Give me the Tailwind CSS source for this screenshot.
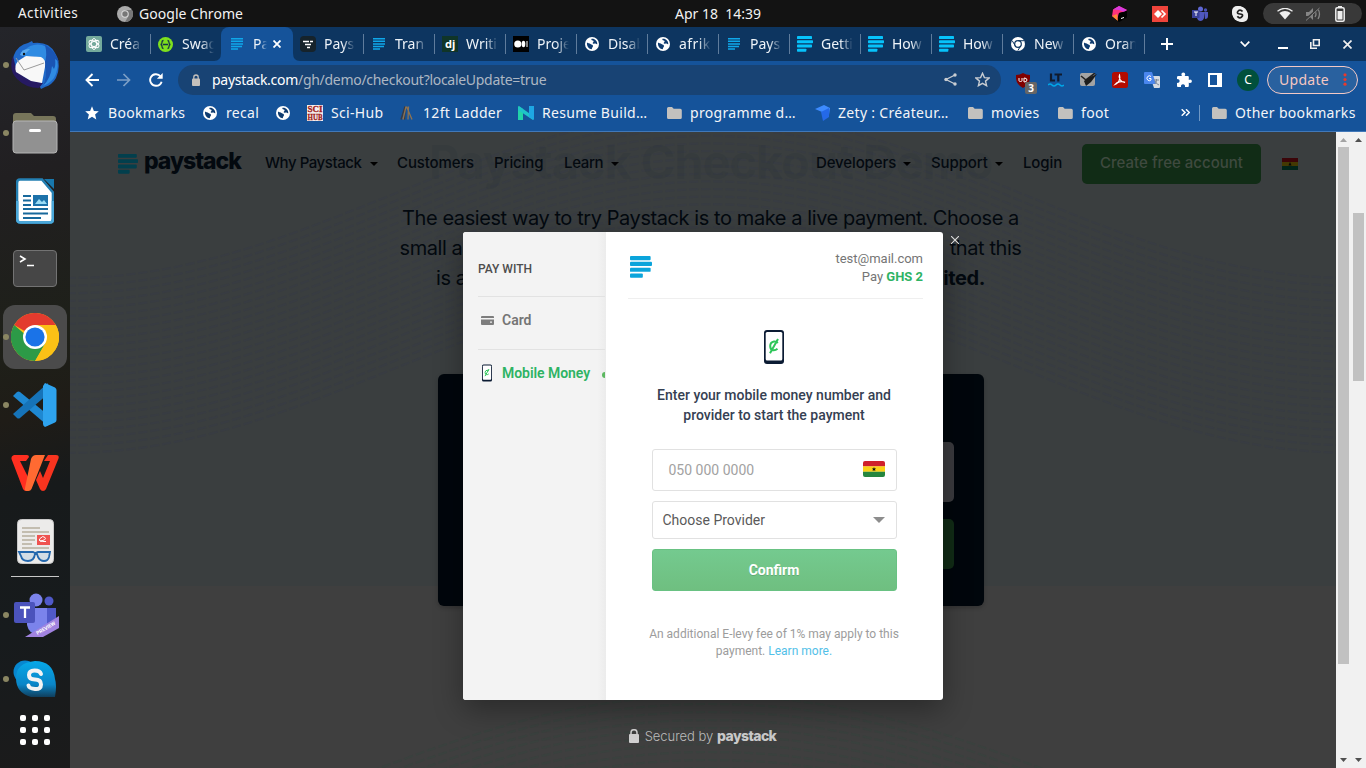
<!DOCTYPE html>
<html lang="en">
<head>
<meta charset="utf-8">
<title>Paystack Checkout Demo</title>
<script src="https://cdn.jsdelivr.net/npm/@tailwindcss/browser@4"></script>
</head>
<body class="w-[1366px] h-[768px] overflow-hidden bg-[#131313] font-['Noto_Sans',sans-serif]">

<svg width="0" height="0" class="absolute">
  <symbol id="stack" viewBox="0 0 24 24"><rect x="0" y="0" width="22.500" height="4.600" rx="1"/><rect x="0" y="6.300" width="24" height="4.600" rx="1"/><rect x="0" y="12.700" width="22.500" height="4.600" rx="1"/><rect x="0" y="19" width="14" height="4.600" rx="1"/></symbol>
  <symbol id="thin" viewBox="0 0 12 12"><path d="M0 .7h12M0 3.300h12M0 5.900h12M0 8.500h11M0 11h7" stroke="#0fa8ea" stroke-width="1.500"/></symbol>
  <symbol id="globe" viewBox="0 0 14 14"><circle cx="7" cy="7" r="7" fill="#fff"/><path d="M2 5.500C3 6.200 4.500 6 5.500 7s2.500.6 2.500 2-1 1.200-1.200 3.200C3.800 12 1.600 9.500 2 5.500zM6.500 1.800c-.5 1.200.2 1.600 1.200 1.600S9 4.600 8 5.400s.5 1.400 1.700 1.200 1.300.8 2.600.6C12.500 4 9.700 1.300 6.500 1.800z" fill="#0f3c70"/></symbol>
  <symbol id="folder" viewBox="0 0 15 12"><path d="M0 1.500Q0 0 1.500 0H5l1.700 1.800h6.600q1.500 0 1.500 1.500v7.200q0 1.500-1.500 1.500H1.500Q0 12 0 10.500z" fill="#c3c1be"/></symbol>
  <symbol id="ghana" viewBox="0 0 22 16"><path d="M2 0h18q2 0 2 2v3.500H0V2q0-2 2-2z" fill="#cf202b"/><path d="M0 5.300h22v5.500H0z" fill="#fbd116"/><path d="M0 10.700h22V14q0 2-2 2H2q-2 0-2-2z" fill="#25863f"/><path d="M11 6l.6 1.400h1.500l-1.100 1 .4 1.600-1.400-.8-1.400.8.4-1.600-1.100-1h1.500z" fill="#111"/></symbol>
  <symbol id="phone" viewBox="0 0 20 34"><rect width="20" height="34" rx="3" fill="#0b1b33"/><rect x="1.700" y="1.900" width="16.600" height="28.600" rx="1.500" fill="#fff"/><path d="M13.800 13Q12.200 11.200 10 11.500 6.200 12.200 6.200 16t3 4.300q2.300.3 4.300-1.500M14 9L6 23.300" fill="none" stroke="#2fc65a" stroke-width="2"/></symbol>
</svg>

<!-- desktop top bar -->
<header class="flex h-[27px] items-center bg-[#131313] text-[14px] leading-none text-[#f2f2f2]">
  <span class="ml-[18px] w-[99px] tracking-[0.4px] [font-size:13.500px]">Activities</span>
  <svg class="size-4" viewBox="0 0 16 16"><circle cx="8" cy="8" r="8" fill="#aaa"/><path d="M8 4h7A8 8 0 018 16l3.500-6z" fill="#777"/><circle cx="8" cy="8" r="3.800" fill="#d8d8d8"/><circle cx="8" cy="8" r="2.700" fill="#777"/></svg>
  <span class="ml-[6px] w-[536px] tracking-[0.05px]">Google Chrome</span>
  <span class="w-[437px] whitespace-pre tracking-[0px]">Apr 18  14:39</span>
  <svg class="size-4" viewBox="0 0 16 16"><path d="M7 0L1 3.500 0 10l7 6 8-5V4z" fill="#000"/><path d="M7 0l8 4-3 2-5 1-2 7-5-4 1-6.500z" fill="#ff337c"/><path d="M7 0l8 4-3 2-5-2-6-.5z" fill="#d93adf"/><path d="M0 10l5-2 1 7z" fill="#ff8a32"/><path d="M7 7l8-2v6l-7 4.500-2-2z" fill="#000"/><path d="M9 12.500l3-1" stroke="#fff"/></svg>
  <svg class="ml-[24px] size-4" viewBox="0 0 16 16"><path d="M0 0h16v16H0z" fill="#ef443b"/><path d="M6 4l4 4-4 4-4-4z" fill="#fff"/><path d="M9.500 4.500L13 8l-3.500 3.500" fill="none" stroke="#fff" stroke-width="1.700"/></svg>
  <svg class="ml-[24px] size-4" viewBox="0 0 16 16"><circle cx="8.500" cy="3" r="2.500" fill="#5f67d4"/><circle cx="13.500" cy="4" r="1.700" fill="#4a52b8"/><path d="M5 6h7v6q-1 3-3.500 3T5 12zM12 6h4v4q0 3-3 3z" fill="#4f57c0"/><path d="M0 4h7.500v8H0z" fill="#3a4199"/><path d="M2 6h4M4 6v4" stroke="#fff"/></svg>
  <svg class="ml-[24px] size-4" viewBox="0 0 16 16"><rect width="12" height="12" rx="5" fill="#eee"/><rect x="4" y="4" width="12" height="12" rx="5" fill="#eee"/><circle cx="8" cy="8" r="7.500" fill="#eee"/><path d="M10.500 5.500Q9.500 4.200 8 4.200T5.600 5.900 8 8t2.400 2T8 11.800t-2.600-1.500" fill="none" stroke="#222" stroke-width="1.700"/></svg>
  <div class="ml-[15px] flex h-[21px] w-[99px] items-center rounded-full bg-[#393939] pl-[14px]">
    <svg class="h-[12px] w-[16px]" viewBox="0 0 16 12"><path d="M.5 3.200Q8-2.400 15.500 3.200" fill="none" stroke="#eee" stroke-width="1.300"/><path d="M2.300 5Q8 1 13.700 5L8 11.500z" fill="#eee"/></svg>
    <svg class="ml-[12px] h-[14px] w-[16px]" viewBox="0 0 16 14"><path d="M1 5h3l4-4v12L4 9H1z" fill="#858585"/><path d="M10 4q2 3 0 6M13 2q3 5 0 10" fill="none" stroke="#858585" stroke-width="1.300"/><path d="M0 13L14 1" stroke="#393939" stroke-width="2"/><path d="M1 13.500L14.500 1" stroke="#858585"/></svg>
    <svg class="ml-[14px] h-[16px] w-[10px]" viewBox="0 0 10 16"><path d="M3 0h4v2H3z" fill="#eee"/><rect x=".8" y="1.800" width="8.400" height="13.400" rx="1.500" fill="none" stroke="#eee" stroke-width="1.500"/><path d="M2.500 5h5v8.500h-5z" fill="#eee"/></svg>
  </div>
</header>

<div class="flex h-[741px]">
  <!-- dock -->
  <aside class="flex w-[70px] flex-col items-center bg-[#1b1c1c] bg-[linear-gradient(165deg,#24252a_0%,#211f21_20%,#1e2019_42%,#1f1c17_52%,#171a1b_62%,#171b1d_80%,#1b1b1b_100%)] pt-[4px]">
    <div class="relative flex h-[68px] w-full items-center justify-center">
      <i class="absolute left-[3px] size-[6px] rounded-full bg-[#8a8662]"></i>
      <svg class="size-12" viewBox="0 0 48 48"><path d="M3 14Q7 4 17 2l4-2 1 2q16-2 22 10 7 12 1 25-4 7-11 9l-4 2-1-2q-12 0-20-7Q-3 28 3 14z" fill="#1f68c8"/><path d="M13 10q7-8 18-6 11 3 15 15 2 9-3 18-5 6-11 8 5-12 1-22-4-8-14-8l-6 1z" fill="#2f8be2"/><path d="M34 4q11 6 14 17l-4-3q1 6-1 10l-2-3q-1 12-9 20 5-12 1-22 4-8 1-19z" fill="#1a55b4"/><path d="M2 15q-5 14 4 23t22 9l4-5-10-2Q10 36 5 27z" fill="#261a63"/><path d="M7 20l8-5 15 1q5 2 4 10l-3 16-11-2L5 31q-2-6 2-11z" fill="#f8f8f8"/><path d="M5 17l8 12 20-7" fill="none" stroke="#9b9b9b" stroke-width="1"/><path d="M12 15l7-7q-8-1-10 6z" fill="#5aa9ed"/><circle cx="13" cy="13" r="1.200" fill="#111"/></svg>
    </div>
    <div class="relative flex h-[68px] w-full items-center justify-center">
      <i class="absolute left-[3px] size-[6px] rounded-full bg-[#8a8662]"></i>
      <svg class="h-[42px] w-[46px]" viewBox="0 0 46 42"><path d="M1 4q0-3 3-3h15l3 3h19q3 0 3 3v6H1z" fill="#77755a"/><rect x="1" y="9" width="44" height="32" rx="3" fill="#919191" stroke="#b5b5b5"/><path d="M18.500 18.500h9" stroke="#fff" stroke-width="3" stroke-linecap="round"/></svg>
    </div>
    <div class="flex h-[68px] items-center">
      <svg class="h-[46px] w-[38px]" viewBox="0 0 38 46"><path d="M4 1.500h22l11 13V41q0 3.500-3.500 3.500h-29Q1 44.500 1 41V5q0-3.500 3-3.500z" fill="#fff" stroke="#237fb2" stroke-width="2.600"/><path d="M1.200 23v18q0 3.500 3.500 3.500h29q3.300 0 3.300-3.500V23" fill="none" stroke="#4aa8da" stroke-width="2.600"/><path d="M28 1h10v10z" fill="#1878ad"/><path d="M7 18h8M7 22.500h8M7 27h8M7 31h25M7 35.500h25M7 40h18" stroke="#18699c" stroke-width="2"/><path d="M17 17h15v11H17z" fill="#1c72aa"/><path d="M19 26l4-5 3 3 2-2 3 4z" fill="#9bdcf5"/></svg>
    </div>
    <div class="flex h-[68px] items-center pb-[2px]">
      <div class="flex h-[37px] w-[44px] rounded-[4px] border border-[#737373] bg-[#464646] pl-[5px] pt-[1px]">
        <svg class="h-[17px] w-[16px]" viewBox="0 0 16 17" fill="none" stroke="#fff" stroke-width="1.600"><path d="M1 4l5 3-5 3M8 13.500h7"/></svg>
      </div>
    </div>
    <div class="relative flex h-[68px] w-full items-center justify-center">
      <div class="flex size-16 items-center justify-center rounded-[12px] bg-[#4b4b4b]">
        <svg class="size-12" viewBox="0 0 48 48"><circle cx="24" cy="24" r="24" fill="#fbc116"/><path d="M24 24L3.200 12A24 24 0 0144.800 12z" fill="#e33b2e"/><path d="M3.200 12A24 24 0 0024 48l10.400-18H24z" fill="#2c9a47"/><path d="M24 12h20.800L24 24z" fill="#e33b2e"/><path d="M24 48l10.400-18L24 24H12z" fill="#2c9a47"/><path d="M24 12h20.800A24 24 0 0124 48l10.400-18z" fill="#fbc116"/><circle cx="24" cy="24" r="12" fill="#fff"/><circle cx="24" cy="24" r="9.600" fill="#1a73e8"/></svg>
      </div>
      <i class="absolute left-[3px] size-[6px] rounded-full bg-[#8a8662]"></i>
    </div>
    <div class="relative flex h-[68px] w-full items-center justify-center">
      <i class="absolute left-[3px] size-[6px] rounded-full bg-[#8a8662]"></i>
      <svg class="h-[44px] w-[44px]" viewBox="0 0 44 44"><path d="M0 13l4-4q1.500-1 3 0l28 23v11z" fill="#1e88d2"/><path d="M0 31l4 4q1.500 1 3 0L35 11V0z" fill="#1673b8"/><path d="M32 0l10 4.500q1.500 1 1.500 2.500v30q0 1.500-1.500 2.500L32 44q-2-1-2-3V3z" fill="#2ea3ee"/></svg>
    </div>
    <div class="flex h-[68px] items-center">
      <svg class="h-[36px] w-[48px]" viewBox="0 0 48 36"><path d="M3 0h13q2 0 2 2l-3 4H9l8 16-2 14q-2 0-3-2L.5 4Q0 1 3 0z" fill="#ff2f20"/><path d="M37 0h8q3.500 0 2.500 3.500L35 34q-1 2-3 2-2 0-3-2l-4-9 4-9 3 7 7-17h-6z" fill="#f8341f"/><path d="M20 4q1.500-4 5-4h9L20.500 34q-1 2-3 2H15q-2-1-1-3z" fill="#ff6a32"/></svg>
    </div>
    <div class="flex h-[69px] items-center">
      <svg class="h-[45px] w-[37px]" viewBox="0 0 37 45"><rect x=".5" y=".5" width="36" height="44" rx="4" fill="#ecebea" stroke="#c9c9c9"/><path d="M5 9h18M5 13h27M5 17h13M5 21h13M5 25h10M5 29h27" stroke="#b5ae9d" stroke-width="1.600"/><path d="M20 16h13v10H20z" fill="#ef5350"/><path d="M23 22q7-1 5-3.500t-5 1 6 3" fill="none" stroke="#fff"/><path d="M2 33h14l2 1 3-1h12l-1 5q-1 4-5 4t-6-4l-1-3h-2q-1 7-7 7t-7-5z" fill="#d3dde5" stroke="#2468ad" stroke-width="1.800"/></svg>
    </div>
    <div class="h-px w-12 bg-[#c8c8c8]"></div>
    <div class="relative flex h-[72px] w-full items-center justify-center pt-[4px]">
      <i class="absolute left-[3px] size-[6px] rounded-full bg-[#8a8662]"></i>
      <svg class="-mr-[2px] h-[44px] w-[46px]" viewBox="0 0 46 44"><circle cx="23" cy="7" r="6.500" fill="#7b83eb"/><circle cx="36" cy="8" r="4.500" fill="#5059c9"/><path d="M33 15h10v16q-2 5-10 5z" fill="#5059c9"/><path d="M14 15h20v17q-2 9-10 9t-10-9z" fill="#7b83eb"/><rect x="1" y="9" width="21" height="21" rx="2" fill="#4b53bc"/><path d="M7 14.500h10M12 14.500V25" stroke="#fff" stroke-width="2.300"/><path d="M46 23v12L30 44H12z" fill="#a183e0"/><text x="24.500" y="42" transform="rotate(-30 24.500 42)" font-family="Roboto" font-weight="700" font-size="5" fill="#fff">PREVIEW</text></svg>
    </div>
    <div class="relative flex h-[60px] w-full items-center justify-center">
      <i class="absolute left-[3px] size-[6px] rounded-full bg-[#8a8662]"></i>
      <svg class="h-[38px] w-[44px]" viewBox="0 0 44 38"><defs><linearGradient id="sk" x1="0" x2="0" y1="0" y2="1"><stop offset="0" stop-color="#06a9e8"/><stop offset=".65" stop-color="#0a86c8"/><stop offset="1" stop-color="#103e5c"/></linearGradient></defs><circle cx="12" cy="12" r="11.500" fill="#0787cf"/><path d="M22 1Q40 1 42 19q2 6 0 18H18Q3 33 3 18T22 1z" fill="url(#sk)"/><path d="M28 14q-1-3.500-6.500-3.500T16 15t6 4.500 6 5-6 4.500-6.500-3.500" fill="none" stroke="#f3f3f3" stroke-width="4" stroke-linecap="round"/></svg>
    </div>
    <div class="mt-[6px] grid grid-cols-3 gap-[6px]">
      <i class="size-[6px] rounded-[2px] bg-white"></i><i class="size-[6px] rounded-[2px] bg-white"></i><i class="size-[6px] rounded-[2px] bg-white"></i>
      <i class="size-[6px] rounded-[2px] bg-white"></i><i class="size-[6px] rounded-[2px] bg-white"></i><i class="size-[6px] rounded-[2px] bg-white"></i>
      <i class="size-[6px] rounded-[2px] bg-white"></i><i class="size-[6px] rounded-[2px] bg-white"></i><i class="size-[6px] rounded-[2px] bg-white"></i>
    </div>
  </aside>

  <!-- browser window -->
  <div class="w-[1296px]">
    <!-- tab strip -->
    <div class="flex h-[34px] items-center bg-[#0d3560] pl-[10px] text-[14px] leading-[20px] text-[#eef3f8]">
      <div class="flex h-full w-[71px] items-center pl-[6px]">
        <svg class="size-4 shrink-0" viewBox="0 0 16 16"><rect width="16" height="16" rx="2" fill="#74aa9c"/><g fill="none" stroke="#fff" stroke-width=".9"><ellipse cx="8" cy="8" rx="2.600" ry="5.500"/><ellipse cx="8" cy="8" rx="2.600" ry="5.500" transform="rotate(60 8 8)"/><ellipse cx="8" cy="8" rx="2.600" ry="5.500" transform="rotate(120 8 8)"/></g></svg>
        <span class="ml-[8px] w-[32px] overflow-hidden mask-r-from-60% mask-r-to-100%">Créa</span><i class="ml-auto h-5 w-px bg-[#5f7c9c]"></i>
      </div>
      <div class="flex h-full w-[71px] items-center pl-[7px]">
        <svg class="size-[15px] shrink-0" viewBox="0 0 15 15"><circle cx="7.500" cy="7.500" r="7.500" fill="#7ee01d"/><path d="M5.500 3.500q-1.500 0-1.500 2t-1.500 2q1.500 0 1.500 2t1.500 2M9.500 3.500q1.500 0 1.500 2t1.500 2q-1.500 0-1.500 2t-1.500 2M5 7.500h5" fill="none" stroke="#173647" stroke-width="1.300"/></svg>
        <span class="ml-[9px] w-[32px] overflow-hidden mask-r-from-60% mask-r-to-100%">Swag</span>
      </div>
      <div class="-ml-[8px] flex h-full">
        <svg class="h-[34px] w-[7px]" viewBox="0 0 7 34"><path d="M7 26v8H0q7 0 7-8z" fill="#15539a"/></svg>
        <div class="flex w-[72px] items-center rounded-t-[8px] bg-[#15539a] pl-[10px]">
          <svg class="size-3 shrink-0"><use href="#thin"/></svg>
          <span class="ml-[10px] w-[14px] overflow-hidden mask-r-from-50% mask-r-to-100%">Pa</span>
          <svg class="ml-[6px] size-[8px]" viewBox="0 0 8 8" stroke="#fff" stroke-width="1.800"><path d="M.5.5l7 7M7.500.5l-7 7"/></svg>
        </div>
        <svg class="h-[34px] w-[7px]" viewBox="0 0 7 34"><path d="M0 26v8h7q-7 0-7-8z" fill="#15539a"/></svg>
      </div>
      <div class="flex h-full w-[64px] items-center">
        <svg class="size-4 shrink-0" viewBox="0 0 16 16"><rect width="16" height="16" rx="4" fill="#16232b"/><path d="M3 5.500h6M10 5.500h3M5 8.500h6M7 11.500h3" stroke="#fff" stroke-width="1.500"/></svg>
        <span class="ml-[8px] w-[31px] overflow-hidden mask-r-from-60% mask-r-to-100%">Pays</span><i class="ml-auto h-5 w-px bg-[#5f7c9c]"></i>
      </div>
      <div class="flex h-full w-[71px] items-center pl-[9px]"><svg class="size-3 shrink-0"><use href="#thin"/></svg><span class="ml-[10px] w-[32px] overflow-hidden mask-r-from-60% mask-r-to-100%">Tran</span><i class="ml-auto h-5 w-px bg-[#5f7c9c]"></i></div>
      <div class="flex h-full w-[71px] items-center pl-[7px]"><svg class="size-4 shrink-0" viewBox="0 0 16 16"><path d="M0 0h16v16H0z" fill="#103528"/><text x="3" y="12" font-family="Noto Sans" font-weight="700" font-size="11" fill="#fff">dj</text></svg><span class="ml-[8px] w-[32px] overflow-hidden mask-r-from-60% mask-r-to-100%">Writi</span><i class="ml-auto h-5 w-px bg-[#5f7c9c]"></i></div>
      <div class="flex h-full w-[71px] items-center pl-[7px]"><svg class="size-4 shrink-0" viewBox="0 0 16 16"><path d="M0 0h16v16H0z" fill="#000"/><circle cx="4.800" cy="8" r="3.600" fill="#fff"/><ellipse cx="10.500" cy="8" rx="1.800" ry="3.200" fill="#fff"/><path d="M14 5v6" stroke="#fff"/></svg><span class="ml-[8px] w-[32px] overflow-hidden mask-r-from-60% mask-r-to-100%">Proje</span><i class="ml-auto h-5 w-px bg-[#5f7c9c]"></i></div>
      <div class="flex h-full w-[71px] items-center pl-[8px]"><svg class="size-[14px] shrink-0"><use href="#globe"/></svg><span class="ml-[9px] w-[32px] overflow-hidden mask-r-from-60% mask-r-to-100%">Disab</span><i class="ml-auto h-5 w-px bg-[#5f7c9c]"></i></div>
      <div class="flex h-full w-[71px] items-center pl-[8px]"><svg class="size-[14px] shrink-0"><use href="#globe"/></svg><span class="ml-[9px] w-[32px] overflow-hidden tracking-[0.4px] mask-r-from-60% mask-r-to-100%">afrik</span><i class="ml-auto h-5 w-px bg-[#5f7c9c]"></i></div>
      <div class="flex h-full w-[71px] items-center pl-[9px]"><svg class="size-3 shrink-0"><use href="#thin"/></svg><span class="ml-[10px] w-[32px] overflow-hidden mask-r-from-60% mask-r-to-100%">Pays</span><i class="ml-auto h-5 w-px bg-[#5f7c9c]"></i></div>
      <div class="flex h-full w-[71px] items-center pl-[7px]"><svg class="size-4 shrink-0 fill-[#06c3fb]"><use href="#stack"/></svg><span class="ml-[8px] w-[32px] overflow-hidden mask-r-from-60% mask-r-to-100%">Getti</span><i class="ml-auto h-5 w-px bg-[#5f7c9c]"></i></div>
      <div class="flex h-full w-[71px] items-center pl-[7px]"><svg class="size-4 shrink-0 fill-[#06c3fb]"><use href="#stack"/></svg><span class="ml-[8px] w-[32px] overflow-hidden mask-r-from-60% mask-r-to-100%">How</span><i class="ml-auto h-5 w-px bg-[#5f7c9c]"></i></div>
      <div class="flex h-full w-[71px] items-center pl-[7px]"><svg class="size-4 shrink-0 fill-[#06c3fb]"><use href="#stack"/></svg><span class="ml-[8px] w-[32px] overflow-hidden mask-r-from-60% mask-r-to-100%">How</span><i class="ml-auto h-5 w-px bg-[#5f7c9c]"></i></div>
      <div class="flex h-full w-[71px] items-center pl-[8px]"><svg class="size-[14px] shrink-0" viewBox="0 0 14 14"><circle cx="7" cy="7" r="7" fill="#fff"/><circle cx="7" cy="7" r="3.300" fill="none" stroke="#0d3560" stroke-width="1.200"/><path d="M7 3.700h6M4.200 8.700l-3-5M9.800 8.700l-3 5" stroke="#0d3560"/></svg><span class="ml-[9px] w-[32px] overflow-hidden mask-r-from-60% mask-r-to-100%">New</span><i class="ml-auto h-5 w-px bg-[#5f7c9c]"></i></div>
      <div class="flex h-full w-[71px] items-center pl-[8px]"><svg class="size-[14px] shrink-0"><use href="#globe"/></svg><span class="ml-[9px] w-[31px] overflow-hidden mask-r-from-60% mask-r-to-100%">Oran</span><i class="ml-auto h-5 w-px bg-[#5f7c9c]"></i></div>
      <svg class="ml-[16px] size-3" viewBox="0 0 12 12" stroke="#fff" stroke-width="2"><path d="M6 0v12M0 6h12"/></svg>
      <svg class="ml-[67px] h-[6px] w-[10px]" viewBox="0 0 10 6" fill="none" stroke="#fff" stroke-width="1.700"><path d="M.7.700L5 5 9.300.7"/></svg>
      <svg class="ml-[28px] h-[12px] w-[10px]" viewBox="0 0 10 12"><path d="M0 10h10" stroke="#fff" stroke-width="2"/></svg>
      <svg class="ml-[22px] size-[10px]" viewBox="0 0 10 10" fill="none" stroke="#eee" stroke-width="1.600"><path d="M3.500.8h5.700v5.700H3.500zM.8 3v6.200H7"/></svg>
      <svg class="ml-[23px] size-[9px]" viewBox="0 0 9 9" stroke="#eee" stroke-width="1.700"><path d="M.5.500l8 8M8.500.5l-8 8"/></svg>
    </div>

    <!-- toolbar -->
    <div class="flex h-[37px] items-center bg-[#15539a] pl-[15px]">
      <svg class="size-[14px]" viewBox="0 0 14 14" fill="none" stroke="#fff" stroke-width="1.900"><path d="M14 7H1.500M7.500 1l-6 6 6 6"/></svg>
      <svg class="ml-[18px] size-[14px]" viewBox="0 0 14 14" fill="none" stroke="#7c9fc6" stroke-width="1.700"><path d="M0 7h12.500M6.500 1l6 6-6 6"/></svg>
      <svg class="ml-[18px] size-[14px]" viewBox="0 0 14 14"><path d="M11.600 3.500A5.800 5.800 0 107 12.800 5.800 5.800 0 0012.600 8.700" fill="none" stroke="#fff" stroke-width="1.900"/><path d="M13.700 0v5.800H7.900z" fill="#fff"/></svg>
      <div class="ml-[15px] flex h-[30px] w-[823px] items-center rounded-full bg-[#184374] pl-[14px] text-[14px]">
        <svg class="h-[12px] w-[8px] shrink-0" viewBox="0 0 8 12"><rect y="4.500" width="8" height="7.500" rx="1" fill="#c4c0bc"/><path d="M1.800 5V3.200a2.200 2.200 0 014.400 0V5" fill="none" stroke="#c4c0bc" stroke-width="1.300"/></svg>
        <span class="ml-[12px] w-[732px] tracking-[-0.29px] text-[#adb7c3]"><span class="text-white">paystack.com</span>/gh/demo/checkout?localeUpdate=true</span>
        <svg class="size-[13px] shrink-0" viewBox="0 0 13 13"><path d="M11 2L2 6.500l9 4.500" fill="none" stroke="#c9cdd2" stroke-width="1.300"/><circle cx="11" cy="2" r="1.700" fill="#c9cdd2"/><circle cx="2" cy="6.500" r="1.700" fill="#c9cdd2"/><circle cx="11" cy="11" r="1.700" fill="#c9cdd2"/></svg>
        <svg class="ml-[18px] size-[15px] shrink-0" viewBox="0 0 15 15"><path d="M7.500 1.300l1.900 4.300 4.700.4-3.600 3.100 1.100 4.600-4.100-2.400-4.100 2.400 1.100-4.600L.9 6l4.700-.4z" fill="none" stroke="#c9cdd2" stroke-width="1.400"/></svg>
      </div>
      <div class="relative ml-[15px] h-[18px] w-[20px]">
        <svg class="mt-[2px] h-[15px] w-[14px]" viewBox="0 0 14 15"><path d="M7 0q3 2 7 2 1 9-7 13Q-1 11 0 2q4 0 7-2z" fill="#800000"/><path d="M3 5v2.500q0 1 1.500 1T6 7.500V5M8 5v4q3 0 3-2T8 5" fill="none" stroke="#fff"/></svg>
        <span class="absolute left-[9px] top-[11px] h-[12px] w-[12px] rounded-[2px] bg-[#666] text-center text-[10px] font-bold leading-[12px] text-white">3</span>
      </div>
      <svg class="ml-[12px] h-[14px] w-[16px]" viewBox="0 0 16 14"><path d="M3 .5v7h4M6.500 1.500H14M10.300 1.500v7" fill="none" stroke="#101a2c" stroke-width="2.200"/><path d="M0 12q2-2 4 0t4 0 4 0 4 0" fill="none" stroke="#00a7e8" stroke-width="1.600"/></svg>
      <svg class="ml-[16px] h-[14px] w-[17px]" viewBox="0 0 17 14"><rect width="15" height="13" rx="2" fill="#a3a3a3"/><path d="M1 3l5 4L15 0" fill="none" stroke="#222" stroke-width="1.600"/><path d="M4 8l4-3 9-4-6 8-5 4z" fill="#1c1c1c"/></svg>
      <svg class="ml-[15px] size-4" viewBox="0 0 16 16"><rect width="16" height="16" rx="2.500" fill="#b30b00"/><path d="M3 12.500c3-1 6-5 4.500-9.500C6 6 9 10.500 13 10.300 9.500 8.800 5 10 3 12.500z" fill="none" stroke="#fff" stroke-width="1.200"/></svg>
      <svg class="ml-[16px] size-4" viewBox="0 0 16 16"><path d="M6 4h9q1 0 1 1v10q0 1-1 1h-5z" fill="#d5dbe3"/><path d="M1 0h7l4 12H1q-1 0-1-1V1q0-1 1-1z" fill="#4a86ee"/><path d="M7 4.500A2.400 2.400 0 107 8V6.500H5" fill="none" stroke="#fff"/><path d="M10 8h5M12.500 7v1q0 3-2 4M11 9q1 3 4 4" fill="none" stroke="#7a8797"/></svg>
      <svg class="ml-[16px] size-[16px]" viewBox="0 0 16 16"><path d="M2.500 4H6q-.6-.8-.6-1.700a1.900 1.900 0 013.800 0q0 .9-.6 1.700h3.200q1 0 1 1v3q.6-.5 1.300-.5a1.800 1.800 0 010 3.600q-.7 0-1.300-.5V14q0 1-1 1H9q.3-2.700-2-2.700T5 15H2q-1 0-1-1v-3q2.700 0 2.700-2T1 7V5q0-1 1.500-1z" fill="#fff"/></svg>
      <svg class="ml-[16px] size-[14px]" viewBox="0 0 14 14"><path d="M0 0h14v14H0z" fill="#fff"/><path d="M2 2h7v10H2z" fill="#15539a"/></svg>
      <div class="ml-[15px] flex size-[22px] items-center justify-center rounded-full bg-[#00503c] text-[12px] leading-none text-white">C</div>
      <div class="ml-[8px] flex h-[28px] w-[91px] items-center rounded-full border border-[#f3c9c6] bg-[#29619f] pl-[11px] text-[14px] tracking-[0.3px] text-[#f6c8c2]">Update
        <svg class="ml-auto mr-[10px] h-[13px] w-[4px]" viewBox="0 0 4 13" fill="#e8392c"><circle cx="2" cy="1.800" r="1.600"/><circle cx="2" cy="6.500" r="1.600"/><circle cx="2" cy="11.200" r="1.600"/></svg>
      </div>
    </div>

    <!-- bookmarks bar -->
    <div class="flex h-[34px] items-center border-b border-[#4178b8] bg-[#15539a] pb-[4px] pl-[15px] text-[14px] leading-none tracking-[0.32px] whitespace-nowrap text-[#f3f5f8]">
      <div class="flex w-[118px] items-center"><svg class="mr-[9px] size-[14px]" viewBox="0 0 14 14"><path d="M7 .3l1.900 4.600 4.900.4-3.700 3.200 1.200 4.900L7 10.800l-4.300 2.600 1.200-4.900L.2 5.300l4.900-.4z" fill="#fff"/></svg>Bookmarks</div>
      <div class="flex w-[73px] items-center"><svg class="mr-[9px] size-[14px]"><use href="#globe"/></svg>recal</div>
      <div class="flex w-[31px] items-center"><svg class="size-[14px]"><use href="#globe"/></svg></div>
      <div class="flex w-[93px] items-center"><svg class="mr-[8px] size-4" viewBox="0 0 16 16"><path d="M0 0h16v16H0z" fill="#f4eeee"/><g font-family="Liberation Serif" font-weight="700" font-size="9" fill="#a01c20" stroke="#a01c20" stroke-width=".3" letter-spacing="0"><text x=".5" y="7" textLength="15" lengthAdjust="spacingAndGlyphs">SCI</text><text x=".5" y="15" textLength="15" lengthAdjust="spacingAndGlyphs">HUB</text></g></svg>Sci-Hub</div>
      <div class="flex w-[118px] items-center"><svg class="mr-[8px] h-[14px] w-[15px]" viewBox="0 0 15 14"><path d="M1 13.500L5 .5M5 .5L4.500 13.500" stroke="#3a3a40" stroke-width="1.400"/><path d="M6 .5L3 13.500M6.500.5L12 13.500M8.500.5L8 13.500" fill="none" stroke="#8f7350" stroke-width="1.300"/></svg>12ft Ladder</div>
      <div class="flex w-[149px] items-center"><svg class="mr-[8px] h-[14px] w-4" viewBox="0 0 16 14"><path d="M0 0l5 3v11H0z" fill="#22d3a8"/><path d="M1 0l14 10v4L0 4z" fill="#1fc4c8"/><path d="M11 0h5v14l-5-3z" fill="#1ea7e4"/></svg>Resume Build…</div>
      <div class="flex w-[148px] items-center"><svg class="mr-[8px] h-3 w-[15px]"><use href="#folder"/></svg>programme d…</div>
      <div class="flex w-[153px] items-center"><svg class="mr-[8px] h-4 w-[15px]" viewBox="0 0 15 16"><path d="M0 4l9-4 6 3-1 7z" fill="#3d8bff"/><path d="M6 7l8-4v9l-6 4z" fill="#2469e8"/></svg>Zety : Créateur…</div>
      <div class="flex w-[90px] items-center"><svg class="mr-[8px] h-3 w-[15px]"><use href="#folder"/></svg>movies</div>
      <div class="flex w-[123px] items-center"><svg class="mr-[8px] h-3 w-[15px]"><use href="#folder"/></svg>foot</div>
      <svg class="h-[7px] w-[9px]" viewBox="0 0 9 7" fill="none" stroke="#fff" stroke-width="1.500"><path d="M.7.300L4 3.500.7 6.700M5 .3l3.300 3.200L5 6.700"/></svg>
      <i class="ml-[9px] mr-[12px] h-4 w-px bg-[#6f98c5]"></i>
      <div class="flex items-center"><svg class="mr-[8px] h-3 w-[15px]"><use href="#folder"/></svg>Other bookmarks</div>
    </div>

    <!-- page viewport -->
    <div class="flex h-[636px]">
      <main class="relative h-[636px] w-[1266px] overflow-hidden bg-[#3f3f3f] font-['Inter',sans-serif] text-[#03090f]">
        <div class="h-[454px] bg-[#3a3e3f]">
          <svg id="waves" class="absolute inset-0 h-[636px] w-[1266px]" viewBox="0 0 1266 636" fill="none" stroke-dasharray="9 3" stroke-width="2.200"></svg>
          <div class="relative w-[1281px]">
            <nav class="flex h-[62px] items-center pl-[48px] text-[15px] font-medium tracking-[-0.12px]">
              <svg class="mt-[2px] size-[20px] fill-[#023f4d]"><use href="#stack"/></svg>
              <span class="-mt-[3px] ml-[6px] w-[121px] text-[23px] font-extrabold tracking-[-1.050px]">paystack</span>
              <span class="w-[105px] tracking-[-0.45px]">Why Paystack</span>
              <svg class="mt-[2px] h-[4px] w-[8px]" viewBox="0 0 8 4"><path d="M0 0h8L4 4z"/></svg>
              <span class="ml-[19px] w-[97px]">Customers</span>
              <span class="w-[70px]">Pricing</span>
              <span class="w-[47px] tracking-[-0.35px]">Learn</span>
              <svg class="mt-[2px] h-[4px] w-[8px]" viewBox="0 0 8 4"><path d="M0 0h8L4 4z"/></svg>
              <span class="ml-[197px] w-[87px]">Developers</span>
              <svg class="mt-[2px] h-[4px] w-[8px]" viewBox="0 0 8 4"><path d="M0 0h8L4 4z"/></svg>
              <span class="ml-[20px] w-[64px]">Support</span>
              <svg class="mt-[2px] h-[4px] w-[8px]" viewBox="0 0 8 4"><path d="M0 0h8L4 4z"/></svg>
              <span class="ml-[20px] w-[59px]">Login</span>
              <span class="mt-[2px] flex h-10 w-[179px] items-center justify-center rounded-[5px] bg-[#112c16] pb-[2px] tracking-[0.02px] text-[#3f4a3f]">Create free account</span>
              <svg class="ml-[21px] mt-[2px] h-[12px] w-4" viewBox="0 0 16 12"><path d="M0 0h16v4H0z" fill="#3b0509"/><path d="M0 4h16v4H0z" fill="#443903"/><path d="M0 8h16v4H0z" fill="#03251a"/><path d="M8 4l1.500 3.500h-3z" fill="#080808"/></svg>
            </nav>
            <h1 class="absolute inset-x-0 top-[4px] text-center text-[47px] font-bold leading-[52px] tracking-[-1.100px] text-[#171f2c]/10">Paystack Checkout Demo</h1>
            <div class="flex flex-col items-center pt-[9px] text-[20px] leading-[30px] tracking-[-0.42px]">
              <p>The easiest way to try Paystack is to make a live payment. Choose a</p>
              <p class="flex w-[622px] justify-between"><span>small amount</span><span>that this</span></p>
              <p class="flex w-[549px] justify-between"><span>is a live</span><span class="font-bold">credited.</span></p>
            </div>
          </div>
          <div class="relative ml-[368px] mt-[81px] flex h-[232px] w-[546px] flex-col items-end rounded-[6px] bg-[#00060c] pr-[30px] pt-[68px] shadow-[0_2px_4px_#0003]">
            <div class="h-[60px] w-[486px] rounded-[5px] bg-[#3b3b3f]"></div>
            <div class="mt-[17px] h-[50px] w-[486px] rounded-[5px] bg-[#112c16]"></div>
          </div>
        </div>

        <!-- checkout dialog -->
        <div class="absolute inset-0 flex flex-col items-center pt-[100px] font-['Roboto',sans-serif]">
          <div class="relative flex h-[468px] w-[480px] rounded-[3px] bg-white shadow-[0_10px_30px_#0005]">
            <svg class="absolute left-[488px] top-[4px] size-[8px]" viewBox="0 0 8 8" stroke="#ddd" stroke-width="1.100"><path d="M0 0l8 8M8 0L0 8"/></svg>
            <div class="w-[143px] rounded-l-[3px] bg-[#f3f3f3] bg-[linear-gradient(90deg,#f3f3f3_94%,#ececec)] pl-[15px] pr-px pt-[28px]">
              <div class="h-[37px] border-b border-[#e2e2e2] text-[12px] font-medium leading-[18px] text-[#4d4d4d]">PAY WITH</div>
              <div class="flex h-[53px] items-center border-b border-[#e2e2e2] pb-[5px] text-[14px] font-semibold text-[#757575]">
                <svg class="ml-[3px] mr-[8px] h-[9px] w-[13px]" viewBox="0 0 13 9"><path d="M1 0h11q1 0 1 1v1H0V1q0-1 1-1zM0 3.500h13V8q0 1-1 1H1Q0 9 0 8z" fill="#7d7d7d"/><path d="M9 6.200h2" stroke="#eee" stroke-width="1.300"/></svg>Card
              </div>
              <div class="flex h-[46px] items-center text-[14px] font-semibold tracking-[-0.05px] text-[#2eb364]">
                <svg class="ml-[4px] mr-[10px] h-[18px] w-[10px]"><use href="#phone"/></svg>
                <span class="w-[100px] whitespace-nowrap">Mobile Money</span>
                <i class="mt-[3px] h-[6px] w-[3px] rounded-l-full bg-[#5cb860]"></i>
              </div>
            </div>
            <div class="w-[337px] pl-[22px] pr-[20px] pt-[18px]">
              <div class="flex h-[49px] justify-between border-b border-[#efefef]">
                <svg class="ml-[2px] mt-[6px] size-[22px] fill-[#0ba4db]"><use href="#stack"/></svg>
                <div class="text-right text-[13px] leading-[18px] text-[#757575]"><div>test@mail.com</div><div>Pay <b class="font-bold text-[#2eb364]">GHS 2</b></div></div>
              </div>
              <div class="flex flex-col items-center pr-[3px] pt-[31px]">
                <svg class="h-[34px] w-[20px]"><use href="#phone"/></svg>
                <p class="mt-[21px] text-center text-[14px] font-medium leading-[20px] text-[#354052]">Enter your mobile money number and<br>provider to start the payment</p>
                <div class="mt-[24px] flex h-[42px] w-[245px] items-center justify-between rounded-[3px] border border-[#e1e1e1] pl-[16px] pr-[11px] text-[14px] text-[#a2a2a2]">050 000 0000<svg class="h-4 w-[22px] -translate-y-[1px]"><use href="#ghana"/></svg></div>
                <div class="mt-[10px] flex h-[38px] w-[245px] items-center justify-between rounded-[3px] border border-[#e1e1e1] pl-[10px] pr-[11px] text-[14px] text-[#5a5a5a]">Choose Provider<svg class="h-[6px] w-[12px]" viewBox="0 0 12 6"><path d="M0 0h12L6 6z" fill="#8d8d8d"/></svg></div>
                <div class="mt-[10px] flex h-[42px] w-[245px] items-center justify-center rounded-[3px] border border-[#69c283] bg-linear-to-b from-[#74ca8f] to-[#6fbf80] text-[14px] font-bold text-white text-shadow-2xs">Confirm</div>
                <p class="mt-[35px] text-center text-[12px] leading-[17px] text-[#9c9c9c]">An additional E-levy fee of 1% may apply to this<br>payment. <span class="text-[#52c0e8]">Learn more.</span></p>
              </div>
            </div>
          </div>
          <div class="mt-[26px] flex items-center pr-px font-['Inter',sans-serif] text-[13px] leading-[20px] text-[#bdbdbd]">
            <svg class="mr-[6px] h-[14px] w-[10px]" viewBox="0 0 10 14"><rect y="5" width="10" height="9" rx="1" fill="#d0d0d0"/><path d="M2 6V3.700a3 3 0 016 0V6" fill="none" stroke="#d0d0d0" stroke-width="1.500"/></svg>
            <span class="font-light tracking-[-0.05px]">Secured by</span><b class="ml-[4px] text-[14px] font-extrabold tracking-[-0.6px] text-[#cacaca]">paystack</b>
          </div>
        </div>
      </main>

      <!-- scrollbars -->
      <div class="flex w-[15px] flex-col items-center bg-[#f1f1f1] pt-[6px]">
        <svg class="h-[4px] w-[7px]" viewBox="0 0 7 4"><path d="M0 4h7L3.500 0z" fill="#a3a3a3"/></svg>
        <div class="mt-[5px] h-[517px] w-[11px] bg-[#c1c1c1]"></div>
        <svg class="mt-auto mb-[6px] h-[4px] w-[7px]" viewBox="0 0 7 4"><path d="M0 0h7L3.500 4z" fill="#505050"/></svg>
      </div>
      <div class="flex w-[15px] flex-col items-center bg-[#f1f1f1] pt-[6px]">
        <svg class="h-[4px] w-[7px]" viewBox="0 0 7 4"><path d="M0 4h7L3.500 0z" fill="#505050"/></svg>
        <div class="mt-[71px] h-[168px] w-[11px] bg-[#c1c1c1]"></div>
        <svg class="mt-auto mb-[6px] h-[4px] w-[7px]" viewBox="0 0 7 4"><path d="M0 0h7L3.500 4z" fill="#505050"/></svg>
      </div>
    </div>
  </div>
</div>

<script>
  // Dashed contour lines behind the hero and below the card
  const waves = document.getElementById('waves');
  let lines = '';
  for (let i = 0; i < 24; i++) {
    const y = 146 + i * 7.6;
    lines += `<path stroke="#383c42" d="M-600 ${y - 165}C-370 ${y - 165} -230 ${y} 0 ${y}S 410 ${y - 165} 640 ${y - 165}S 1040 ${y} 1280 ${y}"/>`;
  }
  for (let i = 0; i < 11; i++) {
    const y = 564 + i * 8;
    lines += `<path stroke="#3a413e" d="M200 ${y + 115}C400 ${y + 35} 500 ${y} 640 ${y}S 880 ${y + 35} 1080 ${y + 115}"/>`;
  }
  waves.innerHTML = lines;
</script>
</body>
</html>
